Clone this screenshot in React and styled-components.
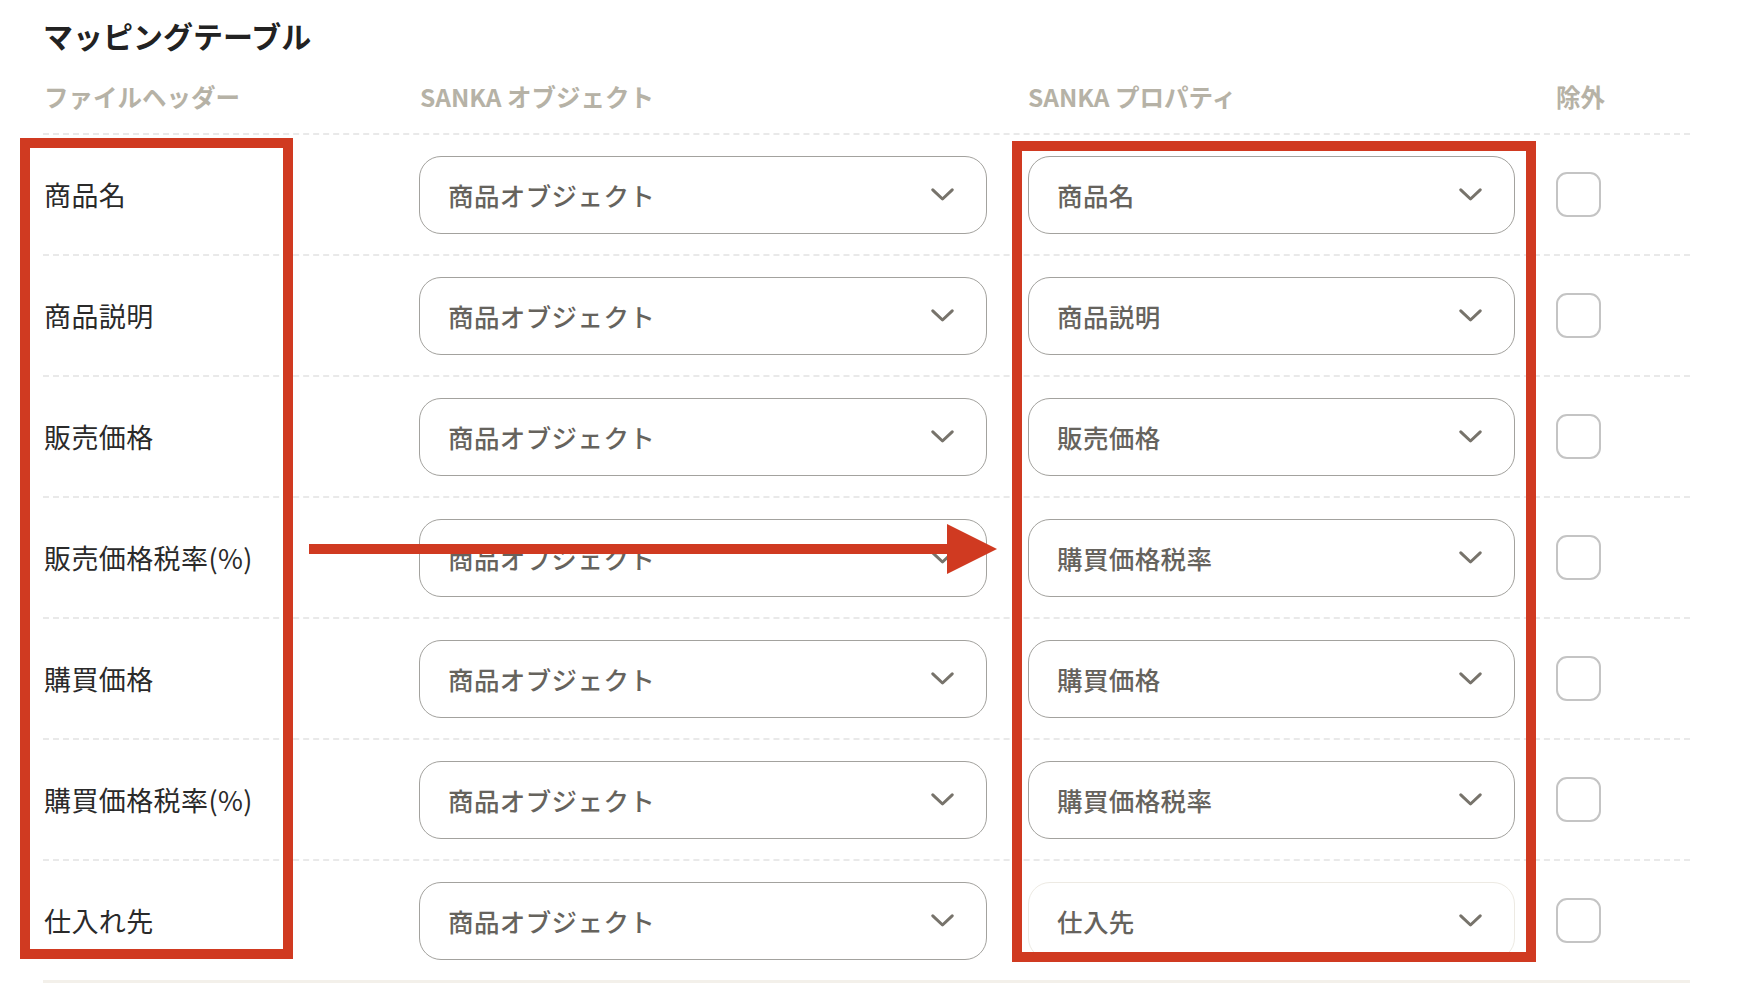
import React from 'react';
import styled, { createGlobalStyle } from 'styled-components';

const GlobalStyle = createGlobalStyle`
  html, body {
    margin: 0;
    padding: 0;
    background: #ffffff;
  }
  body {
    font-family: "Noto Sans CJK JP", "Noto Sans", sans-serif;
  }
`;

const Page = styled.div`
  position: relative;
  width: 1744px;
  height: 988px;
  overflow: hidden;
  padding: 13px 54px 0 43px;
  box-sizing: border-box;
`;

const Title = styled.h2`
  margin: 0;
  font-size: 30px;
  line-height: 44px;
  font-weight: 700;
  color: #222222;
`;

const Grid = styled.div`
  display: grid;
  grid-template-columns: 335px 568px 487px 1fr;
  column-gap: 41px;
  align-items: center;
  box-sizing: border-box;
`;

const HeadRow = styled(Grid)`
  height: 76px;
  padding-top: 2px;
`;

const HeadCell = styled.div`
  font-size: 24.5px;
  font-weight: 700;
  color: #b6b2a6;
  padding-left: ${(p) => p.$indent || 0}px;
  white-space: nowrap;
`;

const Row = styled(Grid)`
  height: 121px;
  border-top: 2px dashed #e9e9e9;
`;

const Table = styled.div`
  border-bottom: 3px solid #f3f0ea;
`;

const Label = styled.div`
  font-size: 27px;
  letter-spacing: 0.4px;
  color: #2a2a2a;
  padding-left: 1px;
  white-space: nowrap;
`;

const Select = styled.div`
  display: flex;
  align-items: center;
  justify-content: space-between;
  height: 78px;
  box-sizing: border-box;
  padding: 0 32px 0 28px;
  border: 1.5px solid ${(p) => (p.$muted ? '#edeae3' : '#a3a29e')};
  border-radius: 22px;
  font-size: 25.5px;
  letter-spacing: 0.4px;
  font-weight: 500;
  color: #66635d;
  background: #fff;
  white-space: nowrap;
`;

const Check = styled.div`
  width: 45px;
  height: 45px;
  box-sizing: border-box;
  border: 2px solid #c4c4c4;
  border-radius: 11px;
`;

const Frame = styled.div`
  position: absolute;
  left: ${(p) => p.$x}px;
  top: ${(p) => p.$y}px;
  width: ${(p) => p.$w}px;
  height: ${(p) => p.$h}px;
  box-sizing: border-box;
  border: 10px solid #d03a21;
  pointer-events: none;
`;

const Arrow = styled.svg`
  position: absolute;
  left: 309px;
  top: 524px;
`;

const Chevron = () => (
  <svg width="23" height="13" viewBox="0 0 23 13">
    <polyline
      points="1.8,1.8 11.5,11 21.2,1.8"
      fill="none"
      stroke="#77736b"
      strokeWidth="3"
      strokeLinecap="round"
      strokeLinejoin="round"
    />
  </svg>
);

const rows = [
  ['商品名', '商品名'],
  ['商品説明', '商品説明'],
  ['販売価格', '販売価格'],
  ['販売価格税率(%)', '購買価格税率'],
  ['購買価格', '購買価格'],
  ['購買価格税率(%)', '購買価格税率'],
  ['仕入れ先', '仕入先'],
];

export default function App() {
  return (
    <Page>
      <GlobalStyle />
      <Title>マッピングテーブル</Title>
      <HeadRow>
        <HeadCell $indent={1}>ファイルヘッダー</HeadCell>
        <HeadCell $indent={1}>SANKA オブジェクト</HeadCell>
        <HeadCell>SANKA プロパティ</HeadCell>
        <HeadCell>除外</HeadCell>
      </HeadRow>
      <Table>
        {rows.map(([label, prop], i) => (
          <Row key={i}>
            <Label>{label}</Label>
            <Select>
              <span>商品オブジェクト</span>
              <Chevron />
            </Select>
            <Select $muted={i === rows.length - 1}>
              <span>{prop}</span>
              <Chevron />
            </Select>
            <Check />
          </Row>
        ))}
      </Table>

      <Frame $x={20} $y={138} $w={273} $h={821} />
      <Frame $x={1012} $y={141} $w={524} $h={821} />
      <Arrow width="688" height="50" viewBox="0 0 688 50">
        <rect x="0" y="20" width="640" height="10" fill="#d03a21" />
        <polygon points="638,0 688,25 638,50" fill="#d03a21" />
      </Arrow>
    </Page>
  );
}
